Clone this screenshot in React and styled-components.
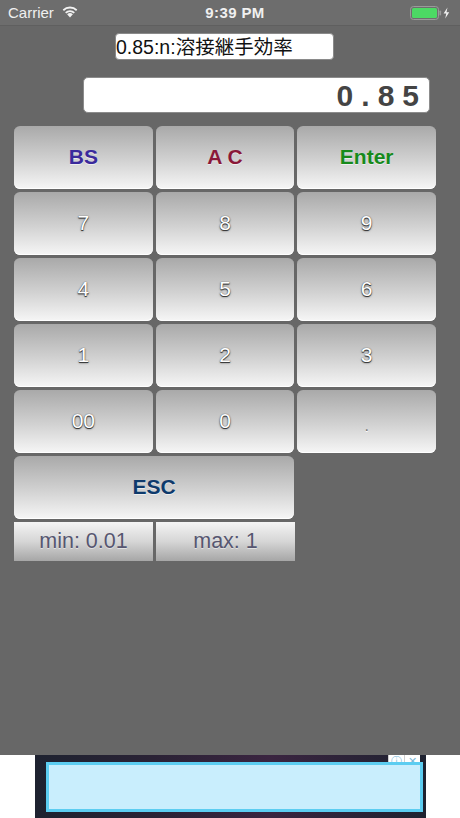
import React from "react";
import styled, { createGlobalStyle, css } from "styled-components";

const GlobalStyle = createGlobalStyle`
  html, body {
    margin: 0;
    padding: 0;
    background: #ffffff;
  }
  body {
    font-family: "Liberation Sans", Arial, sans-serif;
  }
`;

const keys = [
  { label: "BS", color: "#3a2a9c", bold: true },
  { label: "A C", color: "#8a1838", bold: true },
  { label: "Enter", color: "#168a1c", bold: true },
  { label: "7" },
  { label: "8" },
  { label: "9" },
  { label: "4" },
  { label: "5" },
  { label: "6" },
  { label: "1" },
  { label: "2" },
  { label: "3" },
  { label: "00" },
  { label: "0" },
  { label: ".", small: true },
];

function WifiIcon() {
  return (
    <svg width="18" height="13" viewBox="0 0 17 13">
      <path d="M8.5 12.5 L5.6 9.3 A4.2 4.2 0 0 1 11.4 9.3 Z" fill="#f2f2f2" />
      <path
        d="M3.6 7.2 A7 7 0 0 1 13.4 7.2 L12.2 8.5 A5.3 5.3 0 0 0 4.8 8.5 Z"
        fill="#f2f2f2"
      />
      <path
        d="M1.2 4.6 A10.4 10.4 0 0 1 15.8 4.6 L14.6 5.9 A8.7 8.7 0 0 0 2.4 5.9 Z"
        fill="#f2f2f2"
      />
    </svg>
  );
}

function BatteryIcon() {
  return (
    <svg width="42" height="14" viewBox="0 0 42 14">
      <rect x="0.5" y="0.5" width="28" height="13" rx="3" fill="none" stroke="#9a9a9a" />
      <rect x="2" y="2" width="25" height="10" rx="1.6" fill="#4cd964" />
      <rect x="29.5" y="4.5" width="1.6" height="5" rx="0.8" fill="#9a9a9a" />
      <path d="M37.5 1.5 L33.6 7.6 L36.3 7.6 L35.2 12.6 L39.2 6.2 L36.5 6.2 Z" fill="#f2f2f2" />
    </svg>
  );
}

export default function App() {
  return (
    <>
      <GlobalStyle />
      <Screen>
        <StatusBar>
          <Carrier>
            Carrier
            <WifiIcon />
          </Carrier>
          <Clock>9:39 PM</Clock>
          <Battery>
            <BatteryIcon />
          </Battery>
        </StatusBar>

        <Content>
          <TitleBox>0.85:n:溶接継手効率</TitleBox>
          <Display>0.85</Display>

          <KeyGrid>
            {keys.map((k) => (
              <Key key={k.label} $color={k.color} $bold={k.bold} $small={k.small}>
                {k.label}
              </Key>
            ))}
            <Key $wide $color="#0e3a6c" $bold>
              ESC
            </Key>
          </KeyGrid>

          <RangeRow>
            <RangeCell>min: 0.01</RangeCell>
            <RangeCell>max: 1</RangeCell>
          </RangeRow>
        </Content>

        <AdBar>
          <AdFrame>
            <AdChoices>
              <span>ⓘ</span>
              <span>✕</span>
            </AdChoices>
            <AdBanner />
          </AdFrame>
        </AdBar>
      </Screen>
    </>
  );
}

const Screen = styled.div`
  width: 460px;
  height: 818px;
  display: flex;
  flex-direction: column;
  overflow: hidden;
`;

const StatusBar = styled.div`
  height: 25px;
  flex: none;
  background: #6d6d6d;
  border-bottom: 1px solid #5f5f5f;
  display: grid;
  grid-template-columns: 1fr auto 1fr;
  align-items: center;
  padding: 0 8px;
  color: #f0f0f0;
  font-family: "Liberation Sans", Arial, sans-serif;
  font-size: 15px;
`;

const Carrier = styled.div`
  display: flex;
  align-items: center;
  gap: 7px;

  svg {
    margin-top: -2px;
  }
`;

const Clock = styled.div`
  font-weight: bold;
  letter-spacing: 0.4px;
  padding-left: 10px;
`;

const Battery = styled.div`
  display: flex;
  justify-content: flex-end;
  padding-right: 0;
`;

const Content = styled.div`
  flex: 1;
  background: #676767;
  display: flex;
  flex-direction: column;
  padding-top: 7px;
`;

const TitleBox = styled.div`
  margin-left: 115px;
  width: 219px;
  height: 27px;
  box-sizing: border-box;
  background: #ffffff;
  border-radius: 4px;
  border: 1px solid #8a8a8a;
  color: #111;
  font-family: "Liberation Sans", "Noto Sans CJK JP", sans-serif;
  font-size: 19.5px;
  line-height: 27px;
  padding-left: 0;
  white-space: nowrap;
  overflow: hidden;
`;

const Display = styled.div`
  margin: 17px 0 0 83px;
  width: 347px;
  height: 36px;
  box-sizing: border-box;
  background: #ffffff;
  border: 1px solid #8c8c8c;
  border-radius: 5px;
  text-align: right;
  padding-right: 2px;
  color: #444444;
  font-family: "Liberation Sans", Arial, sans-serif;
  font-weight: bold;
  font-size: 30px;
  line-height: 36px;
  letter-spacing: 8px;
`;

const KeyGrid = styled.div`
  margin: 13px 0 0 14px;
  width: 422px;
  display: grid;
  grid-template-columns: repeat(3, 1fr);
  grid-auto-rows: 63px;
  gap: 3px;
`;

const Key = styled.div`
  border-radius: 6px;
  background: linear-gradient(180deg, #a9a9a9 0%, #d2d2d2 55%, #f6f6f6 100%);
  box-shadow: inset 0 -1px 0 #ffffff;
  display: flex;
  align-items: center;
  justify-content: center;
  font-family: "Liberation Sans", Arial, sans-serif;
  font-size: 21px;
  padding-bottom: 2px;
  box-sizing: border-box;
  color: ${(p) => p.$color || "#ffffff"};
  font-weight: ${(p) => (p.$bold ? "bold" : "normal")};
  text-shadow: ${(p) =>
    p.$color
      ? "0 1px 0 rgba(255,255,255,0.6)"
      : "0 1px 0 #3c3c3c, 0 0 1px #444, 0 1px 2px #555"};

  ${(p) =>
    p.$wide &&
    css`
      grid-column: span 2;
    `}

  ${(p) =>
    p.$small &&
    css`
      font-size: 16px;
      padding-top: 10px;
      color: #777;
      text-shadow: 0 1px 0 #fff;
    `}
`;

const RangeRow = styled.div`
  margin: 3px 0 0 14px;
  width: 280px;
  display: grid;
  grid-template-columns: 139px 139px;
  gap: 3px;
`;

const RangeCell = styled.div`
  height: 39px;
  background: linear-gradient(180deg, #f4f4f4 0%, #d6d6d6 50%, #a6a6a6 100%);
  display: flex;
  align-items: center;
  justify-content: center;
  color: #565670;
  font-family: "Liberation Sans", Arial, sans-serif;
  font-size: 21.5px;
  text-shadow: 0 1px 0 rgba(255, 255, 255, 0.5);
`;

const AdBar = styled.div`
  height: 63px;
  flex: none;
  background: #ffffff;
  display: flex;
  padding-left: 35px;
`;

const AdFrame = styled.div`
  position: relative;
  width: 391px;
  height: 100%;
  background: linear-gradient(90deg, #1e2230 0%, #2a2235 30%, #3a2440 60%, #1e2230 100%);
  padding: 7px 3px 6px 11px;
  box-sizing: border-box;
`;

const AdChoices = styled.div`
  position: absolute;
  top: 0;
  right: 6px;
  display: flex;
  background: #ffffff;
  color: #7ab8d8;
  font-size: 11px;
  line-height: 12px;

  span {
    width: 15px;
    text-align: center;
    border-left: 1px solid #cfcfcf;
  }
`;

const AdBanner = styled.div`
  position: relative;
  height: 100%;
  box-sizing: border-box;
  background: #c9eefd;
  border: 3px solid #5ccdf1;
`;
